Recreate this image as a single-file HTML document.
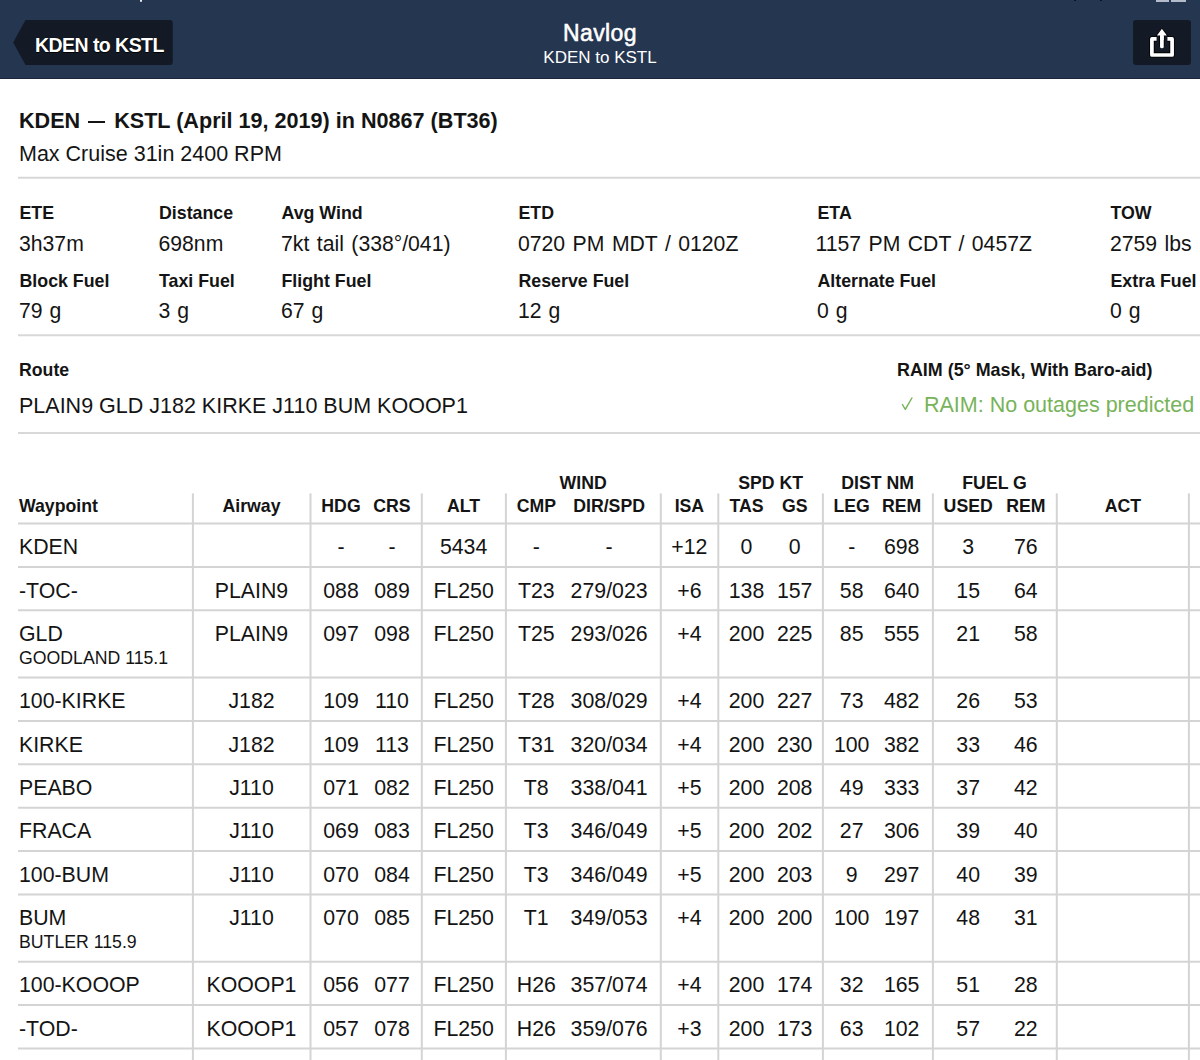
<!DOCTYPE html>
<html><head><meta charset="utf-8"><title>Navlog</title>
<style>
html,body{margin:0;padding:0;}
body{width:1200px;height:1060px;position:relative;overflow:hidden;background:#fff;font-family:"Liberation Sans", sans-serif;color:#141414;}
.t{position:absolute;white-space:nowrap;}
.r{position:absolute;}
.dash{display:inline-block;width:17px;height:1.6px;background:#141414;vertical-align:4.9px;margin:0 3.2px 0 1.8px;}
.nav{position:absolute;left:0;top:0;width:1200px;height:79px;background:#253651;}
.navb{position:absolute;left:0;top:77.5px;width:1200px;height:1.5px;background:#1a2638;}
.btn{position:absolute;background:#131a25;border-radius:3px;}
</style></head>
<body>
<div class="nav"></div>
<div class="navb"></div>
<div class="r" style="left:139.5px;top:0;width:2px;height:1.5px;background:#e8ecf2;border-radius:0 0 1px 1px"></div>
<div class="r" style="left:1074px;top:0;width:2px;height:1px;background:#0d1420"></div>
<div class="r" style="left:1100px;top:0;width:2px;height:1px;background:#0d1420"></div>
<div class="r" style="left:1156px;top:0;width:13px;height:1.5px;background:#b4bccb"></div>
<div class="r" style="left:1171px;top:0;width:15px;height:1.5px;background:#b4bccb"></div>
<svg style="position:absolute;left:0;top:0" width="200" height="80">
<path d="M13.2 42.5 L25.5 20 L170 20 Q172.8 20 172.8 23 L172.8 62 Q172.8 65 170 65 L25.5 65 Z" fill="#131a25"/>
</svg>
<div class="t" style="left:35px;top:36.33px;font-size:19.5px;line-height:19.5px;font-weight:700;color:#fff;letter-spacing:-0.55px;text-shadow:0 1px 0.6px #000,0 0 1px #000">KDEN to KSTL</div>
<div class="t" style="left:400px;width:400px;text-align:center;top:21.65px;font-size:23px;line-height:23px;color:#fff;-webkit-text-stroke:0.55px #fff;letter-spacing:0.4px">Navlog</div>
<div class="t" style="left:400px;width:400px;text-align:center;top:48.85px;font-size:17px;line-height:17px;color:#fff">KDEN to KSTL</div>
<div class="btn" style="left:1133px;top:20px;width:58px;height:45px"></div>
<svg style="position:absolute;left:1133px;top:20px" width="58" height="45" viewBox="0 0 58 45">
<g fill="none" stroke="#000" stroke-width="5.4" stroke-linejoin="round" stroke-linecap="butt">
<path d="M23.6 19 L19 19 L19 34.9 L39 34.9 L39 19 L34.4 19"/>
<path d="M28.9 26.4 L28.9 13"/>
</g>
<g fill="none" stroke="#fff" stroke-width="3.7">
<path d="M23.6 18.9 L18.9 18.9 L18.9 35 L39.1 35 L39.1 18.9 L34.4 18.9" stroke-linejoin="round"/>
<path d="M28.9 26.4 L28.9 13" stroke-linecap="round"/>
</g>
<path d="M22.6 16 L28.9 7.7 L35.2 16 Z" fill="#000"/>
<path d="M23.9 15.4 L28.9 8.7 L33.9 15.4 Z" fill="#fff"/>
<path d="M27.05 14.5 L30.75 14.5 L30.75 20 L27.05 20 Z" fill="#fff"/>
</svg>
<div class="t" style="top:109.64px;left:19.00px;font-size:21.6px;line-height:21.6px;font-weight:700;color:#141414;">KDEN <span class="dash"></span> KSTL (April 19, 2019) in N0867 (BT36)</div>
<div class="t" style="top:144.03px;left:19.00px;font-size:21.5px;line-height:21.5px;color:#141414;">Max Cruise 31in 2400 RPM</div>
<div class="t" style="top:205.17px;left:19.50px;font-size:17.8px;line-height:17.8px;font-weight:700;color:#141414;">ETE</div>
<div class="t" style="top:233.38px;left:19.00px;font-size:21.2px;line-height:21.2px;color:#141414;word-spacing:1.6px;">3h37m</div>
<div class="t" style="top:272.87px;left:19.50px;font-size:17.8px;line-height:17.8px;font-weight:700;color:#141414;">Block Fuel</div>
<div class="t" style="top:299.98px;left:19.00px;font-size:21.2px;line-height:21.2px;color:#141414;word-spacing:1.0px;">79 g</div>
<div class="t" style="top:205.17px;left:159.00px;font-size:17.8px;line-height:17.8px;font-weight:700;color:#141414;">Distance</div>
<div class="t" style="top:233.38px;left:158.50px;font-size:21.2px;line-height:21.2px;color:#141414;word-spacing:1.6px;">698nm</div>
<div class="t" style="top:272.87px;left:159.00px;font-size:17.8px;line-height:17.8px;font-weight:700;color:#141414;">Taxi Fuel</div>
<div class="t" style="top:299.98px;left:158.50px;font-size:21.2px;line-height:21.2px;color:#141414;word-spacing:1.0px;">3 g</div>
<div class="t" style="top:205.17px;left:281.50px;font-size:17.8px;line-height:17.8px;font-weight:700;color:#141414;">Avg Wind</div>
<div class="t" style="top:233.38px;left:281.00px;font-size:21.2px;line-height:21.2px;color:#141414;word-spacing:1.6px;">7kt tail (338°/041)</div>
<div class="t" style="top:272.87px;left:281.50px;font-size:17.8px;line-height:17.8px;font-weight:700;color:#141414;">Flight Fuel</div>
<div class="t" style="top:299.98px;left:281.00px;font-size:21.2px;line-height:21.2px;color:#141414;word-spacing:1.0px;">67 g</div>
<div class="t" style="top:205.17px;left:518.50px;font-size:17.8px;line-height:17.8px;font-weight:700;color:#141414;">ETD</div>
<div class="t" style="top:233.38px;left:518.00px;font-size:21.2px;line-height:21.2px;color:#141414;word-spacing:1.6px;">0720 PM MDT / 0120Z</div>
<div class="t" style="top:272.87px;left:518.50px;font-size:17.8px;line-height:17.8px;font-weight:700;color:#141414;">Reserve Fuel</div>
<div class="t" style="top:299.98px;left:518.00px;font-size:21.2px;line-height:21.2px;color:#141414;word-spacing:1.0px;">12 g</div>
<div class="t" style="top:205.17px;left:817.50px;font-size:17.8px;line-height:17.8px;font-weight:700;color:#141414;">ETA</div>
<div class="t" style="top:233.38px;left:815.50px;font-size:21.2px;line-height:21.2px;color:#141414;word-spacing:1.6px;">1157 PM CDT / 0457Z</div>
<div class="t" style="top:272.87px;left:817.50px;font-size:17.8px;line-height:17.8px;font-weight:700;color:#141414;">Alternate Fuel</div>
<div class="t" style="top:299.98px;left:817.00px;font-size:21.2px;line-height:21.2px;color:#141414;word-spacing:1.0px;">0 g</div>
<div class="t" style="top:205.17px;left:1110.50px;font-size:17.8px;line-height:17.8px;font-weight:700;color:#141414;">TOW</div>
<div class="t" style="top:233.38px;left:1110.00px;font-size:21.2px;line-height:21.2px;color:#141414;word-spacing:1.6px;">2759 lbs</div>
<div class="t" style="top:272.87px;left:1110.50px;font-size:17.8px;line-height:17.8px;font-weight:700;color:#141414;">Extra Fuel</div>
<div class="t" style="top:299.98px;left:1110.00px;font-size:21.2px;line-height:21.2px;color:#141414;word-spacing:1.0px;">0 g</div>
<div class="t" style="top:361.85px;left:19.00px;font-size:17.7px;line-height:17.7px;font-weight:700;color:#141414;">Route</div>
<div class="t" style="top:395.53px;left:19.00px;font-size:21.5px;line-height:21.5px;color:#141414;">PLAIN9 GLD J182 KIRKE J110 BUM KOOOP1</div>
<div class="t" style="top:362.19px;left:897.00px;font-size:17.9px;line-height:17.9px;font-weight:700;color:#141414;">RAIM (5° Mask, With Baro-aid)</div>
<div class="t" style="top:394.83px;left:924.00px;font-size:21.5px;line-height:21.5px;color:#78b35a;">RAIM: No outages predicted</div>
<svg style="position:absolute;left:0;top:0" width="1200" height="1060"><g stroke="#d4d4d4" stroke-width="2" fill="none"><line x1="192.9" y1="494.2" x2="192.9" y2="1060" stroke-linecap="round"/><line x1="310.5" y1="494.2" x2="310.5" y2="1060" stroke-linecap="round"/><line x1="421.8" y1="494.2" x2="421.8" y2="1060" stroke-linecap="round"/><line x1="505.9" y1="494.2" x2="505.9" y2="1060" stroke-linecap="round"/><line x1="660.8" y1="494.2" x2="660.8" y2="1060" stroke-linecap="round"/><line x1="718.3" y1="494.2" x2="718.3" y2="1060" stroke-linecap="round"/><line x1="822.9" y1="494.2" x2="822.9" y2="1060" stroke-linecap="round"/><line x1="932.9" y1="494.2" x2="932.9" y2="1060" stroke-linecap="round"/><line x1="1056.8" y1="494.2" x2="1056.8" y2="1060" stroke-linecap="round"/><line x1="1188.9" y1="494.2" x2="1188.9" y2="1060" stroke-linecap="round"/><line x1="18" y1="523.5" x2="1200" y2="523.5"/><line x1="18" y1="566.9" x2="1200" y2="566.9"/><line x1="18" y1="610.3" x2="1200" y2="610.3"/><line x1="18" y1="677.5" x2="1200" y2="677.5"/><line x1="18" y1="720.9" x2="1200" y2="720.9"/><line x1="18" y1="764.3" x2="1200" y2="764.3"/><line x1="18" y1="807.7" x2="1200" y2="807.7"/><line x1="18" y1="851.1" x2="1200" y2="851.1"/><line x1="18" y1="894.5" x2="1200" y2="894.5"/><line x1="18" y1="961.7" x2="1200" y2="961.7"/><line x1="18" y1="1005.1" x2="1200" y2="1005.1"/><line x1="18" y1="1048.5" x2="1200" y2="1048.5"/><line x1="18" y1="177.8" x2="1200" y2="177.8" stroke="#d8d8d8"/><line x1="18" y1="335.3" x2="1200" y2="335.3" stroke="#d8d8d8"/><line x1="18" y1="432.9" x2="1200" y2="432.9" stroke="#d8d8d8"/></g></svg>
<div class="t" style="top:474.75px;left:383.20px;width:400px;text-align:center;font-size:17.7px;line-height:17.7px;font-weight:700;color:#141414;">WIND</div>
<div class="t" style="top:474.75px;left:570.60px;width:400px;text-align:center;font-size:17.7px;line-height:17.7px;font-weight:700;color:#141414;">SPD KT</div>
<div class="t" style="top:474.75px;left:677.60px;width:400px;text-align:center;font-size:17.7px;line-height:17.7px;font-weight:700;color:#141414;">DIST NM</div>
<div class="t" style="top:474.75px;left:794.60px;width:400px;text-align:center;font-size:17.7px;line-height:17.7px;font-weight:700;color:#141414;">FUEL G</div>
<div class="t" style="top:497.85px;left:19.00px;font-size:17.7px;line-height:17.7px;font-weight:700;color:#141414;">Waypoint</div>
<div class="t" style="top:497.85px;left:51.50px;width:400px;text-align:center;font-size:17.7px;line-height:17.7px;font-weight:700;color:#141414;">Airway</div>
<div class="t" style="top:497.85px;left:141.00px;width:400px;text-align:center;font-size:17.7px;line-height:17.7px;font-weight:700;color:#141414;">HDG</div>
<div class="t" style="top:497.85px;left:192.00px;width:400px;text-align:center;font-size:17.7px;line-height:17.7px;font-weight:700;color:#141414;">CRS</div>
<div class="t" style="top:497.85px;left:263.60px;width:400px;text-align:center;font-size:17.7px;line-height:17.7px;font-weight:700;color:#141414;">ALT</div>
<div class="t" style="top:497.85px;left:336.30px;width:400px;text-align:center;font-size:17.7px;line-height:17.7px;font-weight:700;color:#141414;">CMP</div>
<div class="t" style="top:497.85px;left:409.10px;width:400px;text-align:center;font-size:17.7px;line-height:17.7px;font-weight:700;color:#141414;">DIR/SPD</div>
<div class="t" style="top:497.85px;left:489.40px;width:400px;text-align:center;font-size:17.7px;line-height:17.7px;font-weight:700;color:#141414;">ISA</div>
<div class="t" style="top:497.85px;left:546.50px;width:400px;text-align:center;font-size:17.7px;line-height:17.7px;font-weight:700;color:#141414;">TAS</div>
<div class="t" style="top:497.85px;left:594.70px;width:400px;text-align:center;font-size:17.7px;line-height:17.7px;font-weight:700;color:#141414;">GS</div>
<div class="t" style="top:497.85px;left:651.70px;width:400px;text-align:center;font-size:17.7px;line-height:17.7px;font-weight:700;color:#141414;">LEG</div>
<div class="t" style="top:497.85px;left:701.70px;width:400px;text-align:center;font-size:17.7px;line-height:17.7px;font-weight:700;color:#141414;">REM</div>
<div class="t" style="top:497.85px;left:768.20px;width:400px;text-align:center;font-size:17.7px;line-height:17.7px;font-weight:700;color:#141414;">USED</div>
<div class="t" style="top:497.85px;left:825.80px;width:400px;text-align:center;font-size:17.7px;line-height:17.7px;font-weight:700;color:#141414;">REM</div>
<div class="t" style="top:497.85px;left:923.00px;width:400px;text-align:center;font-size:17.7px;line-height:17.7px;font-weight:700;color:#141414;">ACT</div>
<div class="t" style="top:537.10px;left:19.00px;font-size:21.3px;line-height:21.3px;color:#141414;">KDEN</div>
<div class="t" style="top:537.10px;left:141.00px;width:400px;text-align:center;font-size:21.3px;line-height:21.3px;color:#141414;">-</div>
<div class="t" style="top:537.10px;left:192.00px;width:400px;text-align:center;font-size:21.3px;line-height:21.3px;color:#141414;">-</div>
<div class="t" style="top:537.10px;left:263.60px;width:400px;text-align:center;font-size:21.3px;line-height:21.3px;color:#141414;">5434</div>
<div class="t" style="top:537.10px;left:336.30px;width:400px;text-align:center;font-size:21.3px;line-height:21.3px;color:#141414;">-</div>
<div class="t" style="top:537.10px;left:409.10px;width:400px;text-align:center;font-size:21.3px;line-height:21.3px;color:#141414;">-</div>
<div class="t" style="top:537.10px;left:489.40px;width:400px;text-align:center;font-size:21.3px;line-height:21.3px;color:#141414;">+12</div>
<div class="t" style="top:537.10px;left:546.50px;width:400px;text-align:center;font-size:21.3px;line-height:21.3px;color:#141414;">0</div>
<div class="t" style="top:537.10px;left:594.70px;width:400px;text-align:center;font-size:21.3px;line-height:21.3px;color:#141414;">0</div>
<div class="t" style="top:537.10px;left:651.70px;width:400px;text-align:center;font-size:21.3px;line-height:21.3px;color:#141414;">-</div>
<div class="t" style="top:537.10px;left:701.70px;width:400px;text-align:center;font-size:21.3px;line-height:21.3px;color:#141414;">698</div>
<div class="t" style="top:537.10px;left:768.20px;width:400px;text-align:center;font-size:21.3px;line-height:21.3px;color:#141414;">3</div>
<div class="t" style="top:537.10px;left:825.80px;width:400px;text-align:center;font-size:21.3px;line-height:21.3px;color:#141414;">76</div>
<div class="t" style="top:580.50px;left:19.00px;font-size:21.3px;line-height:21.3px;color:#141414;">-TOC-</div>
<div class="t" style="top:580.50px;left:51.50px;width:400px;text-align:center;font-size:21.3px;line-height:21.3px;color:#141414;">PLAIN9</div>
<div class="t" style="top:580.50px;left:141.00px;width:400px;text-align:center;font-size:21.3px;line-height:21.3px;color:#141414;">088</div>
<div class="t" style="top:580.50px;left:192.00px;width:400px;text-align:center;font-size:21.3px;line-height:21.3px;color:#141414;">089</div>
<div class="t" style="top:580.50px;left:263.60px;width:400px;text-align:center;font-size:21.3px;line-height:21.3px;color:#141414;">FL250</div>
<div class="t" style="top:580.50px;left:336.30px;width:400px;text-align:center;font-size:21.3px;line-height:21.3px;color:#141414;">T23</div>
<div class="t" style="top:580.50px;left:409.10px;width:400px;text-align:center;font-size:21.3px;line-height:21.3px;color:#141414;">279/023</div>
<div class="t" style="top:580.50px;left:489.40px;width:400px;text-align:center;font-size:21.3px;line-height:21.3px;color:#141414;">+6</div>
<div class="t" style="top:580.50px;left:546.50px;width:400px;text-align:center;font-size:21.3px;line-height:21.3px;color:#141414;">138</div>
<div class="t" style="top:580.50px;left:594.70px;width:400px;text-align:center;font-size:21.3px;line-height:21.3px;color:#141414;">157</div>
<div class="t" style="top:580.50px;left:651.70px;width:400px;text-align:center;font-size:21.3px;line-height:21.3px;color:#141414;">58</div>
<div class="t" style="top:580.50px;left:701.70px;width:400px;text-align:center;font-size:21.3px;line-height:21.3px;color:#141414;">640</div>
<div class="t" style="top:580.50px;left:768.20px;width:400px;text-align:center;font-size:21.3px;line-height:21.3px;color:#141414;">15</div>
<div class="t" style="top:580.50px;left:825.80px;width:400px;text-align:center;font-size:21.3px;line-height:21.3px;color:#141414;">64</div>
<div class="t" style="top:623.89px;left:19.00px;font-size:21.3px;line-height:21.3px;color:#141414;">GLD</div>
<div class="t" style="top:649.55px;left:19.00px;font-size:17.7px;line-height:17.7px;color:#141414;">GOODLAND 115.1</div>
<div class="t" style="top:623.89px;left:51.50px;width:400px;text-align:center;font-size:21.3px;line-height:21.3px;color:#141414;">PLAIN9</div>
<div class="t" style="top:623.89px;left:141.00px;width:400px;text-align:center;font-size:21.3px;line-height:21.3px;color:#141414;">097</div>
<div class="t" style="top:623.89px;left:192.00px;width:400px;text-align:center;font-size:21.3px;line-height:21.3px;color:#141414;">098</div>
<div class="t" style="top:623.89px;left:263.60px;width:400px;text-align:center;font-size:21.3px;line-height:21.3px;color:#141414;">FL250</div>
<div class="t" style="top:623.89px;left:336.30px;width:400px;text-align:center;font-size:21.3px;line-height:21.3px;color:#141414;">T25</div>
<div class="t" style="top:623.89px;left:409.10px;width:400px;text-align:center;font-size:21.3px;line-height:21.3px;color:#141414;">293/026</div>
<div class="t" style="top:623.89px;left:489.40px;width:400px;text-align:center;font-size:21.3px;line-height:21.3px;color:#141414;">+4</div>
<div class="t" style="top:623.89px;left:546.50px;width:400px;text-align:center;font-size:21.3px;line-height:21.3px;color:#141414;">200</div>
<div class="t" style="top:623.89px;left:594.70px;width:400px;text-align:center;font-size:21.3px;line-height:21.3px;color:#141414;">225</div>
<div class="t" style="top:623.89px;left:651.70px;width:400px;text-align:center;font-size:21.3px;line-height:21.3px;color:#141414;">85</div>
<div class="t" style="top:623.89px;left:701.70px;width:400px;text-align:center;font-size:21.3px;line-height:21.3px;color:#141414;">555</div>
<div class="t" style="top:623.89px;left:768.20px;width:400px;text-align:center;font-size:21.3px;line-height:21.3px;color:#141414;">21</div>
<div class="t" style="top:623.89px;left:825.80px;width:400px;text-align:center;font-size:21.3px;line-height:21.3px;color:#141414;">58</div>
<div class="t" style="top:691.10px;left:19.00px;font-size:21.3px;line-height:21.3px;color:#141414;">100-KIRKE</div>
<div class="t" style="top:691.10px;left:51.50px;width:400px;text-align:center;font-size:21.3px;line-height:21.3px;color:#141414;">J182</div>
<div class="t" style="top:691.10px;left:141.00px;width:400px;text-align:center;font-size:21.3px;line-height:21.3px;color:#141414;">109</div>
<div class="t" style="top:691.10px;left:192.00px;width:400px;text-align:center;font-size:21.3px;line-height:21.3px;color:#141414;">110</div>
<div class="t" style="top:691.10px;left:263.60px;width:400px;text-align:center;font-size:21.3px;line-height:21.3px;color:#141414;">FL250</div>
<div class="t" style="top:691.10px;left:336.30px;width:400px;text-align:center;font-size:21.3px;line-height:21.3px;color:#141414;">T28</div>
<div class="t" style="top:691.10px;left:409.10px;width:400px;text-align:center;font-size:21.3px;line-height:21.3px;color:#141414;">308/029</div>
<div class="t" style="top:691.10px;left:489.40px;width:400px;text-align:center;font-size:21.3px;line-height:21.3px;color:#141414;">+4</div>
<div class="t" style="top:691.10px;left:546.50px;width:400px;text-align:center;font-size:21.3px;line-height:21.3px;color:#141414;">200</div>
<div class="t" style="top:691.10px;left:594.70px;width:400px;text-align:center;font-size:21.3px;line-height:21.3px;color:#141414;">227</div>
<div class="t" style="top:691.10px;left:651.70px;width:400px;text-align:center;font-size:21.3px;line-height:21.3px;color:#141414;">73</div>
<div class="t" style="top:691.10px;left:701.70px;width:400px;text-align:center;font-size:21.3px;line-height:21.3px;color:#141414;">482</div>
<div class="t" style="top:691.10px;left:768.20px;width:400px;text-align:center;font-size:21.3px;line-height:21.3px;color:#141414;">26</div>
<div class="t" style="top:691.10px;left:825.80px;width:400px;text-align:center;font-size:21.3px;line-height:21.3px;color:#141414;">53</div>
<div class="t" style="top:734.50px;left:19.00px;font-size:21.3px;line-height:21.3px;color:#141414;">KIRKE</div>
<div class="t" style="top:734.50px;left:51.50px;width:400px;text-align:center;font-size:21.3px;line-height:21.3px;color:#141414;">J182</div>
<div class="t" style="top:734.50px;left:141.00px;width:400px;text-align:center;font-size:21.3px;line-height:21.3px;color:#141414;">109</div>
<div class="t" style="top:734.50px;left:192.00px;width:400px;text-align:center;font-size:21.3px;line-height:21.3px;color:#141414;">113</div>
<div class="t" style="top:734.50px;left:263.60px;width:400px;text-align:center;font-size:21.3px;line-height:21.3px;color:#141414;">FL250</div>
<div class="t" style="top:734.50px;left:336.30px;width:400px;text-align:center;font-size:21.3px;line-height:21.3px;color:#141414;">T31</div>
<div class="t" style="top:734.50px;left:409.10px;width:400px;text-align:center;font-size:21.3px;line-height:21.3px;color:#141414;">320/034</div>
<div class="t" style="top:734.50px;left:489.40px;width:400px;text-align:center;font-size:21.3px;line-height:21.3px;color:#141414;">+4</div>
<div class="t" style="top:734.50px;left:546.50px;width:400px;text-align:center;font-size:21.3px;line-height:21.3px;color:#141414;">200</div>
<div class="t" style="top:734.50px;left:594.70px;width:400px;text-align:center;font-size:21.3px;line-height:21.3px;color:#141414;">230</div>
<div class="t" style="top:734.50px;left:651.70px;width:400px;text-align:center;font-size:21.3px;line-height:21.3px;color:#141414;">100</div>
<div class="t" style="top:734.50px;left:701.70px;width:400px;text-align:center;font-size:21.3px;line-height:21.3px;color:#141414;">382</div>
<div class="t" style="top:734.50px;left:768.20px;width:400px;text-align:center;font-size:21.3px;line-height:21.3px;color:#141414;">33</div>
<div class="t" style="top:734.50px;left:825.80px;width:400px;text-align:center;font-size:21.3px;line-height:21.3px;color:#141414;">46</div>
<div class="t" style="top:777.89px;left:19.00px;font-size:21.3px;line-height:21.3px;color:#141414;">PEABO</div>
<div class="t" style="top:777.89px;left:51.50px;width:400px;text-align:center;font-size:21.3px;line-height:21.3px;color:#141414;">J110</div>
<div class="t" style="top:777.89px;left:141.00px;width:400px;text-align:center;font-size:21.3px;line-height:21.3px;color:#141414;">071</div>
<div class="t" style="top:777.89px;left:192.00px;width:400px;text-align:center;font-size:21.3px;line-height:21.3px;color:#141414;">082</div>
<div class="t" style="top:777.89px;left:263.60px;width:400px;text-align:center;font-size:21.3px;line-height:21.3px;color:#141414;">FL250</div>
<div class="t" style="top:777.89px;left:336.30px;width:400px;text-align:center;font-size:21.3px;line-height:21.3px;color:#141414;">T8</div>
<div class="t" style="top:777.89px;left:409.10px;width:400px;text-align:center;font-size:21.3px;line-height:21.3px;color:#141414;">338/041</div>
<div class="t" style="top:777.89px;left:489.40px;width:400px;text-align:center;font-size:21.3px;line-height:21.3px;color:#141414;">+5</div>
<div class="t" style="top:777.89px;left:546.50px;width:400px;text-align:center;font-size:21.3px;line-height:21.3px;color:#141414;">200</div>
<div class="t" style="top:777.89px;left:594.70px;width:400px;text-align:center;font-size:21.3px;line-height:21.3px;color:#141414;">208</div>
<div class="t" style="top:777.89px;left:651.70px;width:400px;text-align:center;font-size:21.3px;line-height:21.3px;color:#141414;">49</div>
<div class="t" style="top:777.89px;left:701.70px;width:400px;text-align:center;font-size:21.3px;line-height:21.3px;color:#141414;">333</div>
<div class="t" style="top:777.89px;left:768.20px;width:400px;text-align:center;font-size:21.3px;line-height:21.3px;color:#141414;">37</div>
<div class="t" style="top:777.89px;left:825.80px;width:400px;text-align:center;font-size:21.3px;line-height:21.3px;color:#141414;">42</div>
<div class="t" style="top:821.30px;left:19.00px;font-size:21.3px;line-height:21.3px;color:#141414;">FRACA</div>
<div class="t" style="top:821.30px;left:51.50px;width:400px;text-align:center;font-size:21.3px;line-height:21.3px;color:#141414;">J110</div>
<div class="t" style="top:821.30px;left:141.00px;width:400px;text-align:center;font-size:21.3px;line-height:21.3px;color:#141414;">069</div>
<div class="t" style="top:821.30px;left:192.00px;width:400px;text-align:center;font-size:21.3px;line-height:21.3px;color:#141414;">083</div>
<div class="t" style="top:821.30px;left:263.60px;width:400px;text-align:center;font-size:21.3px;line-height:21.3px;color:#141414;">FL250</div>
<div class="t" style="top:821.30px;left:336.30px;width:400px;text-align:center;font-size:21.3px;line-height:21.3px;color:#141414;">T3</div>
<div class="t" style="top:821.30px;left:409.10px;width:400px;text-align:center;font-size:21.3px;line-height:21.3px;color:#141414;">346/049</div>
<div class="t" style="top:821.30px;left:489.40px;width:400px;text-align:center;font-size:21.3px;line-height:21.3px;color:#141414;">+5</div>
<div class="t" style="top:821.30px;left:546.50px;width:400px;text-align:center;font-size:21.3px;line-height:21.3px;color:#141414;">200</div>
<div class="t" style="top:821.30px;left:594.70px;width:400px;text-align:center;font-size:21.3px;line-height:21.3px;color:#141414;">202</div>
<div class="t" style="top:821.30px;left:651.70px;width:400px;text-align:center;font-size:21.3px;line-height:21.3px;color:#141414;">27</div>
<div class="t" style="top:821.30px;left:701.70px;width:400px;text-align:center;font-size:21.3px;line-height:21.3px;color:#141414;">306</div>
<div class="t" style="top:821.30px;left:768.20px;width:400px;text-align:center;font-size:21.3px;line-height:21.3px;color:#141414;">39</div>
<div class="t" style="top:821.30px;left:825.80px;width:400px;text-align:center;font-size:21.3px;line-height:21.3px;color:#141414;">40</div>
<div class="t" style="top:864.70px;left:19.00px;font-size:21.3px;line-height:21.3px;color:#141414;">100-BUM</div>
<div class="t" style="top:864.70px;left:51.50px;width:400px;text-align:center;font-size:21.3px;line-height:21.3px;color:#141414;">J110</div>
<div class="t" style="top:864.70px;left:141.00px;width:400px;text-align:center;font-size:21.3px;line-height:21.3px;color:#141414;">070</div>
<div class="t" style="top:864.70px;left:192.00px;width:400px;text-align:center;font-size:21.3px;line-height:21.3px;color:#141414;">084</div>
<div class="t" style="top:864.70px;left:263.60px;width:400px;text-align:center;font-size:21.3px;line-height:21.3px;color:#141414;">FL250</div>
<div class="t" style="top:864.70px;left:336.30px;width:400px;text-align:center;font-size:21.3px;line-height:21.3px;color:#141414;">T3</div>
<div class="t" style="top:864.70px;left:409.10px;width:400px;text-align:center;font-size:21.3px;line-height:21.3px;color:#141414;">346/049</div>
<div class="t" style="top:864.70px;left:489.40px;width:400px;text-align:center;font-size:21.3px;line-height:21.3px;color:#141414;">+5</div>
<div class="t" style="top:864.70px;left:546.50px;width:400px;text-align:center;font-size:21.3px;line-height:21.3px;color:#141414;">200</div>
<div class="t" style="top:864.70px;left:594.70px;width:400px;text-align:center;font-size:21.3px;line-height:21.3px;color:#141414;">203</div>
<div class="t" style="top:864.70px;left:651.70px;width:400px;text-align:center;font-size:21.3px;line-height:21.3px;color:#141414;">9</div>
<div class="t" style="top:864.70px;left:701.70px;width:400px;text-align:center;font-size:21.3px;line-height:21.3px;color:#141414;">297</div>
<div class="t" style="top:864.70px;left:768.20px;width:400px;text-align:center;font-size:21.3px;line-height:21.3px;color:#141414;">40</div>
<div class="t" style="top:864.70px;left:825.80px;width:400px;text-align:center;font-size:21.3px;line-height:21.3px;color:#141414;">39</div>
<div class="t" style="top:908.10px;left:19.00px;font-size:21.3px;line-height:21.3px;color:#141414;">BUM</div>
<div class="t" style="top:933.75px;left:19.00px;font-size:17.7px;line-height:17.7px;color:#141414;">BUTLER 115.9</div>
<div class="t" style="top:908.10px;left:51.50px;width:400px;text-align:center;font-size:21.3px;line-height:21.3px;color:#141414;">J110</div>
<div class="t" style="top:908.10px;left:141.00px;width:400px;text-align:center;font-size:21.3px;line-height:21.3px;color:#141414;">070</div>
<div class="t" style="top:908.10px;left:192.00px;width:400px;text-align:center;font-size:21.3px;line-height:21.3px;color:#141414;">085</div>
<div class="t" style="top:908.10px;left:263.60px;width:400px;text-align:center;font-size:21.3px;line-height:21.3px;color:#141414;">FL250</div>
<div class="t" style="top:908.10px;left:336.30px;width:400px;text-align:center;font-size:21.3px;line-height:21.3px;color:#141414;">T1</div>
<div class="t" style="top:908.10px;left:409.10px;width:400px;text-align:center;font-size:21.3px;line-height:21.3px;color:#141414;">349/053</div>
<div class="t" style="top:908.10px;left:489.40px;width:400px;text-align:center;font-size:21.3px;line-height:21.3px;color:#141414;">+4</div>
<div class="t" style="top:908.10px;left:546.50px;width:400px;text-align:center;font-size:21.3px;line-height:21.3px;color:#141414;">200</div>
<div class="t" style="top:908.10px;left:594.70px;width:400px;text-align:center;font-size:21.3px;line-height:21.3px;color:#141414;">200</div>
<div class="t" style="top:908.10px;left:651.70px;width:400px;text-align:center;font-size:21.3px;line-height:21.3px;color:#141414;">100</div>
<div class="t" style="top:908.10px;left:701.70px;width:400px;text-align:center;font-size:21.3px;line-height:21.3px;color:#141414;">197</div>
<div class="t" style="top:908.10px;left:768.20px;width:400px;text-align:center;font-size:21.3px;line-height:21.3px;color:#141414;">48</div>
<div class="t" style="top:908.10px;left:825.80px;width:400px;text-align:center;font-size:21.3px;line-height:21.3px;color:#141414;">31</div>
<div class="t" style="top:975.30px;left:19.00px;font-size:21.3px;line-height:21.3px;color:#141414;">100-KOOOP</div>
<div class="t" style="top:975.30px;left:51.50px;width:400px;text-align:center;font-size:21.3px;line-height:21.3px;color:#141414;">KOOOP1</div>
<div class="t" style="top:975.30px;left:141.00px;width:400px;text-align:center;font-size:21.3px;line-height:21.3px;color:#141414;">056</div>
<div class="t" style="top:975.30px;left:192.00px;width:400px;text-align:center;font-size:21.3px;line-height:21.3px;color:#141414;">077</div>
<div class="t" style="top:975.30px;left:263.60px;width:400px;text-align:center;font-size:21.3px;line-height:21.3px;color:#141414;">FL250</div>
<div class="t" style="top:975.30px;left:336.30px;width:400px;text-align:center;font-size:21.3px;line-height:21.3px;color:#141414;">H26</div>
<div class="t" style="top:975.30px;left:409.10px;width:400px;text-align:center;font-size:21.3px;line-height:21.3px;color:#141414;">357/074</div>
<div class="t" style="top:975.30px;left:489.40px;width:400px;text-align:center;font-size:21.3px;line-height:21.3px;color:#141414;">+4</div>
<div class="t" style="top:975.30px;left:546.50px;width:400px;text-align:center;font-size:21.3px;line-height:21.3px;color:#141414;">200</div>
<div class="t" style="top:975.30px;left:594.70px;width:400px;text-align:center;font-size:21.3px;line-height:21.3px;color:#141414;">174</div>
<div class="t" style="top:975.30px;left:651.70px;width:400px;text-align:center;font-size:21.3px;line-height:21.3px;color:#141414;">32</div>
<div class="t" style="top:975.30px;left:701.70px;width:400px;text-align:center;font-size:21.3px;line-height:21.3px;color:#141414;">165</div>
<div class="t" style="top:975.30px;left:768.20px;width:400px;text-align:center;font-size:21.3px;line-height:21.3px;color:#141414;">51</div>
<div class="t" style="top:975.30px;left:825.80px;width:400px;text-align:center;font-size:21.3px;line-height:21.3px;color:#141414;">28</div>
<div class="t" style="top:1018.69px;left:19.00px;font-size:21.3px;line-height:21.3px;color:#141414;">-TOD-</div>
<div class="t" style="top:1018.69px;left:51.50px;width:400px;text-align:center;font-size:21.3px;line-height:21.3px;color:#141414;">KOOOP1</div>
<div class="t" style="top:1018.69px;left:141.00px;width:400px;text-align:center;font-size:21.3px;line-height:21.3px;color:#141414;">057</div>
<div class="t" style="top:1018.69px;left:192.00px;width:400px;text-align:center;font-size:21.3px;line-height:21.3px;color:#141414;">078</div>
<div class="t" style="top:1018.69px;left:263.60px;width:400px;text-align:center;font-size:21.3px;line-height:21.3px;color:#141414;">FL250</div>
<div class="t" style="top:1018.69px;left:336.30px;width:400px;text-align:center;font-size:21.3px;line-height:21.3px;color:#141414;">H26</div>
<div class="t" style="top:1018.69px;left:409.10px;width:400px;text-align:center;font-size:21.3px;line-height:21.3px;color:#141414;">359/076</div>
<div class="t" style="top:1018.69px;left:489.40px;width:400px;text-align:center;font-size:21.3px;line-height:21.3px;color:#141414;">+3</div>
<div class="t" style="top:1018.69px;left:546.50px;width:400px;text-align:center;font-size:21.3px;line-height:21.3px;color:#141414;">200</div>
<div class="t" style="top:1018.69px;left:594.70px;width:400px;text-align:center;font-size:21.3px;line-height:21.3px;color:#141414;">173</div>
<div class="t" style="top:1018.69px;left:651.70px;width:400px;text-align:center;font-size:21.3px;line-height:21.3px;color:#141414;">63</div>
<div class="t" style="top:1018.69px;left:701.70px;width:400px;text-align:center;font-size:21.3px;line-height:21.3px;color:#141414;">102</div>
<div class="t" style="top:1018.69px;left:768.20px;width:400px;text-align:center;font-size:21.3px;line-height:21.3px;color:#141414;">57</div>
<div class="t" style="top:1018.69px;left:825.80px;width:400px;text-align:center;font-size:21.3px;line-height:21.3px;color:#141414;">22</div>
<svg style="position:absolute;left:895px;top:392px" width="24" height="24"><path d="M7.4 12.5 L10.3 17.4 L16.9 6" fill="none" stroke="#78b35a" stroke-width="1.45" stroke-linecap="round" stroke-linejoin="round"/></svg>
</body></html>
